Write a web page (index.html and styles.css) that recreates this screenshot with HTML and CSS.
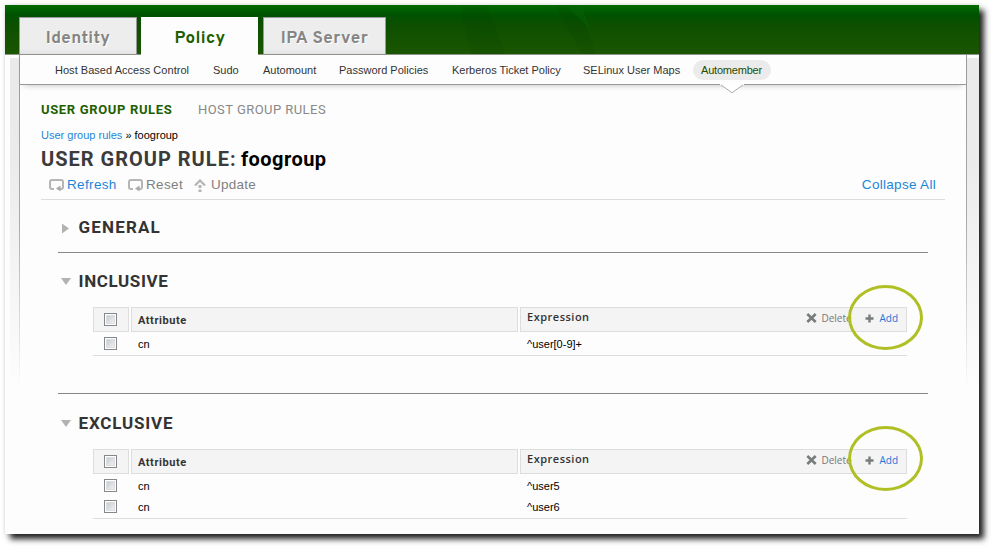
FILE: index.html
```html
<!DOCTYPE html>
<html lang="en">
<head>
<meta charset="utf-8">
<title>User group rule: foogroup</title>
<link rel="stylesheet" href="styles.css">
</head>
<body>
<div class="window">
  <header class="banner">
    <svg class="streaks" width="974" height="49" viewBox="0 0 974 49"><path d="M455 0h27l18 49h-34zM550 0h24l9 26 8 23h-14z" fill="#003c00" opacity=".13"/><path d="M560 0h16l9 24z" fill="#087008" opacity=".3"/></svg>
    <nav class="tabs">
      <a class="tab"><span class="t-identity">Identity</span></a>
      <a class="tab active"><span class="t-policy">Policy</span></a>
      <a class="tab server"><span class="t-server">IPA Server</span></a>
    </nav>
  </header>
  <div class="body">
    <div class="gutter"></div>
    <main class="panel">
      <nav class="subnav">
        <a class="n1">Host Based Access Control</a><a class="n2">Sudo</a><a class="n3">Automount</a><a class="n4">Password Policies</a><a class="n5">Kerberos Ticket Policy</a><a class="n6">SELinux User Maps</a><a class="pill">Automember<svg class="notch" width="24" height="10" viewBox="0 0 24 10"><path d="M0 0h24v1h-1L12 9 1 1H0z" fill="#fff"/><path d="M1 .8L12 8.800 23 .8" fill="none" stroke="#aaa"/></svg></a>
      </nav>
      <div class="content">
        <div class="facets"><a class="facet-on">USER GROUP RULES</a><a class="facet-off">HOST GROUP RULES</a></div>
        <div class="crumbs"><a>User group rules</a> » foogroup</div>
        <h1><span class="kind">USER GROUP RULE:</span><span class="name">foogroup</span></h1>
        <div class="toolbar">
          <svg width="15" height="13" viewBox="0 0 15 13"><path d="M5 10H3Q1 10 1 8V3Q1 1 3 1h9q2 0 2 2v5q0 2-2 2h-2" fill="none" stroke="#b5b5b5" stroke-width="2"/><path d="M11.500 6.500v6L7 9.600z" fill="#aaa"/></svg><a class="refresh">Refresh</a>
          <svg width="15" height="13" viewBox="0 0 15 13"><path d="M5 10H3Q1 10 1 8V3Q1 1 3 1h9q2 0 2 2v5q0 2-2 2h-2" fill="none" stroke="#b5b5b5" stroke-width="2"/><path d="M11.500 6.500v6L7 9.600z" fill="#aaa"/></svg><a class="reset">Reset</a>
          <svg width="12" height="13" viewBox="0 0 12 13"><path d="M1 6.500L6 1.500l5 5" fill="none" stroke="#b5b5b5" stroke-width="2.200"/><path d="M4.500 6h3v3h-3zM4.500 10.500h3V13h-3z" fill="#b5b5b5"/></svg><a class="update">Update</a>
          <a class="collapse">Collapse All</a>
        </div>
        <section class="general">
          <h2><i class="closed"></i><span class="s-general">GENERAL</span></h2>
        </section>
        <section class="inclusive">
          <h2><i class="open"></i><span class="s-inclusive">INCLUSIVE</span></h2>
          <div class="table">
            <div class="head">
              <div class="cell check"><b class="box"></b></div>
              <div class="cell attr">Attribute</div>
              <div class="cell expr"><span class="e-label">Expression</span>
                <span class="actions"><svg width="11" height="10" viewBox="0 0 11 10"><path d="M1.300 1l8.400 8M9.700 1L1.300 9" stroke="#777d7a" stroke-width="2.600"/></svg><a class="delete">Delete</a><svg class="plus" width="9" height="9" viewBox="0 0 9 9"><path d="M4.500 .5v8M.5 4.500h8" stroke="#777d7a" stroke-width="2.400"/></svg><a class="add">Add</a></span>
                <em class="ring"></em>
              </div>
            </div>
            <div class="rows"><div class="row"><span><b class="box"></b></span><span>cn</span><span>^user[0-9]+</span></div></div>
          </div>
        </section>
        <section class="exclusive">
          <h2><i class="open"></i><span class="s-exclusive">EXCLUSIVE</span></h2>
          <div class="table">
            <div class="head">
              <div class="cell check"><b class="box"></b></div>
              <div class="cell attr">Attribute</div>
              <div class="cell expr"><span class="e-label">Expression</span>
                <span class="actions"><svg width="11" height="10" viewBox="0 0 11 10"><path d="M1.300 1l8.400 8M9.700 1L1.300 9" stroke="#777d7a" stroke-width="2.600"/></svg><a class="delete">Delete</a><svg class="plus" width="9" height="9" viewBox="0 0 9 9"><path d="M4.500 .5v8M.5 4.500h8" stroke="#777d7a" stroke-width="2.400"/></svg><a class="add">Add</a></span>
                <em class="ring"></em>
              </div>
            </div>
            <div class="rows"><div class="row"><span><b class="box"></b></span><span>cn</span><span>^user5</span></div><div class="row"><span><b class="box"></b></span><span>cn</span><span>^user6</span></div></div>
          </div>
        </section>
      </div>
    </main>
    <div class="gutter right"></div>
  </div>
</div>
</body>
</html>
```
FILE: styles.css
```css
* { box-sizing: border-box; }
body { margin: 0; padding: 5px; width: 994px; height: 550px; overflow: hidden; background: #fff; font: 11px/14px "Liberation Sans", Arial, sans-serif; color: #000; }
a, span { white-space: nowrap; }
svg { display: block; flex: none; }
.window { width: 974px; height: 529px; background: #fdfdfd; box-shadow: 5px 5px 6px 0 #222, 0 0 4px #ddd; }
.banner { position: relative; height: 50px; padding: 12px 0 0 14px; border-bottom: 1px solid #8d938a; background: linear-gradient(#006c00 0, #006000 4px, #005200 10px, #0d4f00 20px, #1b5600 49px); }
.streaks { position: absolute; left: 0; top: 0; }
.tabs { position: relative; display: flex; gap: 4px; height: 38px; }
.tab { width: 118px; height: 37px; display: flex; justify-content: center; align-items: center; padding-top: 5px; border: 1px solid #999; border-bottom: 0; background: linear-gradient(#ededed 85%, #e2e2e2); color: #858585; font: bold 17px/20px "Overpass", Roboto, sans-serif; text-shadow: 1px 1px 0 #fff; }
.tab.active { height: 38px; width: 117px; padding-top: 4px; background: #fdfdfd; border-color: #fdfdfd; color: #1d5f00; }
.tab.server { width: 123px; margin-left: 1px; }
.t-identity { letter-spacing: .4px; }
.t-policy { letter-spacing: .4px; padding-left: 1px; }
.t-server { letter-spacing: .5px; }
.body { display: flex; height: 479px; }
.gutter { width: 9px; height: 332px; margin: 3px 0 0 5px; background: linear-gradient(#eaeaea, #ebebeb 30%, #fdfdfd); }
.gutter.right { width: 12px; margin-left: 0; }
.panel { width: 948px; border: solid transparent; border-width: 0 1px; background: linear-gradient(#999, #aaa 35%, #fdfdfd 70%) left / 1px 100% no-repeat, linear-gradient(#999, #aaa 35%, #fdfdfd 70%) right / 1px 100% no-repeat; background-origin: border-box; }
.subnav { position: relative; display: flex; align-items: center; height: 30px; padding-left: 35px; border-bottom: 1px solid #999; box-shadow: 0 4px 6px -4px #bbb; color: #333; }
.n1 { width: 158px; letter-spacing: .03px; } .n2 { width: 50px; } .n3 { width: 76px; } .n4 { width: 113px; } .n5 { width: 131px; } .n6 { width: 110px; }
.n3, .pill { padding-left: 0; }
.pill { position: relative; width: 78px; height: 20px; border-radius: 10px; background: #ebebeb; color: #1d4d00; padding-left: 8px; line-height: 20px; letter-spacing: -.2px; }
.notch { position: absolute; left: 27px; top: 24px; }
.content { padding: 16px 21px 0 21px; }
.facets { display: flex; height: 17px; font: 13px/17px Roboto, sans-serif; }
.facet-on { width: 157px; font-weight: bold; color: #1d5f00; letter-spacing: .65px; }
.facet-off { color: #888; letter-spacing: .45px; }
.crumbs { height: 15px; margin-top: 10px; line-height: 15px; }
.crumbs a, .refresh, .collapse { color: #1d85d8; }
h1 { display: flex; height: 24px; margin: 5px 0 0; font: bold 20px/22px Roboto, sans-serif; color: #3b3b3b; }
.kind { width: 200px; letter-spacing: 1px; }
.name { color: #000; letter-spacing: .45px; }
.toolbar { display: flex; align-items: center; height: 28px; padding: 0 8px 1px 8px; border-bottom: 1px solid #ddd; font-size: 13.500px; color: #808080; }
.refresh, .reset, .update { margin-left: 3px; letter-spacing: .35px; }
.refresh { width: 61px; } .reset { width: 48px; } .update { margin-left: 5px; letter-spacing: .25px; }
.collapse { margin: 0 1px 0 auto; letter-spacing: .3px; }
section { margin: 0 17px; border-bottom: 1px solid #888; }
.general { height: 53px; padding-top: 15px; }
.inclusive { height: 141px; padding-top: 16px; }
.exclusive { height: 135px; padding-top: 17px; border-bottom: 0; }
h2 { display: flex; align-items: center; height: 24px; margin: 0; font: bold 17px/24px Roboto, sans-serif; color: #333; }
h2 span { margin-left: -.4px; }
.s-general { letter-spacing: 1.150px; }
.s-inclusive { letter-spacing: .6px; }
.s-exclusive { letter-spacing: .8px; }
.closed { width: 17px; height: 10px; margin: 3px 0 0 4px; background: #b2b2b2; clip-path: polygon(0 0, 7px 5px, 0 10px); }
.open { width: 18px; height: 7px; margin: 1px 0 0 3px; background: #b2b2b2; clip-path: polygon(0 0, 10px 0, 5px 7px); }
.table { width: 814px; margin: 14px 0 0 35px; }
.head { display: grid; grid-template-columns: 36px 387px 387px; gap: 2px; height: 25px; }
.cell { height: 25px; border: 1px solid #ddd; background: #f4f4f4; }
.check { display: flex; align-items: center; padding-left: 10px; }
.attr { padding: 1px 0 0 6px; font: bold 11px/23px Roboto, sans-serif; color: #333; letter-spacing: .55px; }
.expr { position: relative; display: flex; padding: 0 8px 0 6px; font: 10px/21px "Open Sans", sans-serif; }
.e-label { font: 600 11px/18px "Open Sans", sans-serif; color: #333; letter-spacing: .5px; }
.actions { display: flex; align-items: center; height: 20px; margin-left: auto; color: #777; }
.delete { width: 30px; margin-left: 4px; }
.plus { margin-left: 14px; }
.add { margin-left: 5px; color: #1d75d8; }
.ring { position: absolute; left: 327px; top: -23px; width: 75px; height: 65px; border: 3px solid #afbf24; border-radius: 50%; }
.exclusive .ring { top: -24px; }
.rows { height: 24px; border-bottom: 1px solid #ddd; }
.row { display: grid; grid-template-columns: 45px 389px 1fr; height: 22px; align-items: center; }
.inclusive .row > span + span { padding-top: 2px; }
.exclusive .row { height: 21px; }
.exclusive .rows { height: 45px; padding-top: 1px; }
.row > span:first-child { padding-left: 11px; }
.box { display: block; width: 13px; height: 13px; border: 1px solid #85888a; background: linear-gradient(135deg, #bfc7d0, #f6f6f6) content-box, #f4f4f4; padding: 1px; box-shadow: inset 0 0 0 1px #fff; outline: 1px solid #ddd; outline-offset: -3px; }
```
